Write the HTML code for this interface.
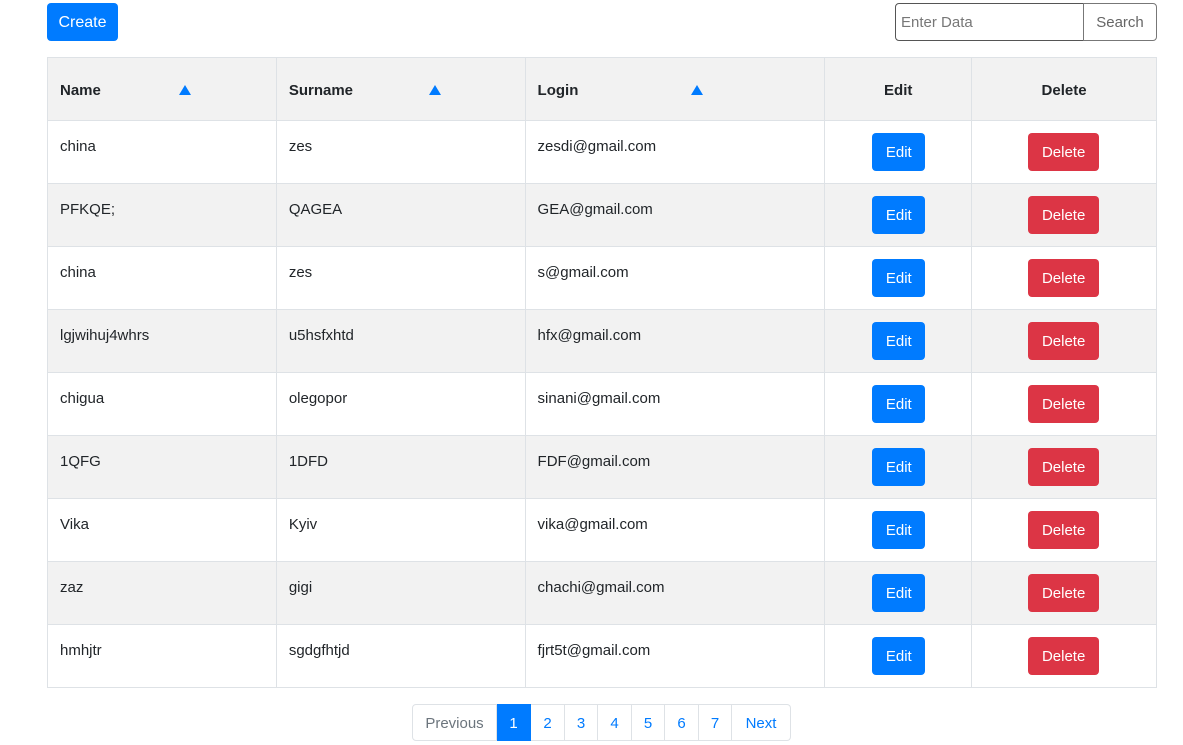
<!DOCTYPE html>
<html><head><style>
body{margin:0;width:1183px;height:745px;background:#fff;font-family:"Liberation Sans",sans-serif;font-size:15px;color:#212529;position:relative;overflow:hidden}
.a{position:absolute;box-sizing:border-box}
.btn{position:absolute;box-sizing:border-box;border-radius:4px;color:#fff;text-align:center;font-size:15px}
.blue{background:#007bff}.red{background:#dc3545}
table{position:absolute;left:47px;top:57px;border-collapse:collapse;width:1110px}
td,th{border:1px solid #dee2e6;height:63px;padding:0 12px;box-sizing:border-box;text-align:left;vertical-align:top;line-height:24px}
td{padding-top:14px}
th{vertical-align:middle;font-weight:bold;padding-top:4px}
tr:nth-child(even) td{background:#f2f2f2}
thead th{background:#f2f2f2}
td.c{position:relative}
.c .btn{top:12px;height:38px;line-height:40px}
.c .blue{left:47px;width:53px}
.c .red{left:56px;width:71px}
.tri{display:inline-block;width:0;height:0;border-left:6px solid transparent;border-right:6px solid transparent;border-bottom:10px solid #007bff;position:absolute}
.pg{position:absolute;top:704px;height:37px;box-sizing:border-box;border:1px solid #dee2e6;border-left:none;color:#007bff;text-align:center;line-height:38px;font-size:15px}
</style></head><body>
<div class="btn blue" style="left:47px;top:3px;width:71px;height:38px;line-height:40px;font-size:16px">Create</div>
<div class="a" style="left:895px;top:3px;width:189px;height:38px;border:1px solid #555;border-radius:4px 0 0 4px;color:#777;padding-left:5px;line-height:38px;font-size:15px">Enter Data</div>
<div class="a" style="left:1083px;top:3px;width:74px;height:38px;border:1px solid #777;border-radius:0 4px 4px 0;color:#666;text-align:center;line-height:38px;font-size:15px">Search</div>
<table>
<colgroup><col style="width:229px"><col style="width:249px"><col style="width:300px"><col style="width:147px"><col style="width:185px"></colgroup>
<thead><tr><th style="position:relative">Name<span class="tri" style="left:131px;top:27px"></span></th><th style="position:relative">Surname<span class="tri" style="left:152px;top:27px"></span></th><th style="position:relative">Login<span class="tri" style="left:165px;top:27px"></span></th><th style="text-align:center">Edit</th><th style="text-align:center">Delete</th></tr></thead>
<tbody>
<tr><td>china</td><td>zes</td><td>zesdi@gmail.com</td><td class="c"><div class="btn blue">Edit</div></td><td class="c"><div class="btn red">Delete</div></td></tr>
<tr><td>PFKQE;</td><td>QAGEA</td><td>GEA@gmail.com</td><td class="c"><div class="btn blue">Edit</div></td><td class="c"><div class="btn red">Delete</div></td></tr>
<tr><td>china</td><td>zes</td><td>s@gmail.com</td><td class="c"><div class="btn blue">Edit</div></td><td class="c"><div class="btn red">Delete</div></td></tr>
<tr><td>lgjwihuj4whrs</td><td>u5hsfxhtd</td><td>hfx@gmail.com</td><td class="c"><div class="btn blue">Edit</div></td><td class="c"><div class="btn red">Delete</div></td></tr>
<tr><td>chigua</td><td>olegopor</td><td>sinani@gmail.com</td><td class="c"><div class="btn blue">Edit</div></td><td class="c"><div class="btn red">Delete</div></td></tr>
<tr><td>1QFG</td><td>1DFD</td><td>FDF@gmail.com</td><td class="c"><div class="btn blue">Edit</div></td><td class="c"><div class="btn red">Delete</div></td></tr>
<tr><td>Vika</td><td>Kyiv</td><td>vika@gmail.com</td><td class="c"><div class="btn blue">Edit</div></td><td class="c"><div class="btn red">Delete</div></td></tr>
<tr><td>zaz</td><td>gigi</td><td>chachi@gmail.com</td><td class="c"><div class="btn blue">Edit</div></td><td class="c"><div class="btn red">Delete</div></td></tr>
<tr><td>hmhjtr</td><td>sgdgfhtjd</td><td>fjrt5t@gmail.com</td><td class="c"><div class="btn blue">Edit</div></td><td class="c"><div class="btn red">Delete</div></td></tr>
</tbody></table>
<div class="pg" style="left:412px;width:85px;border-left:1px solid #dee2e6;border-radius:4px 0 0 4px;color:#6c757d">Previous</div>
<div class="pg" style="left:497px;width:34px;background:#007bff;color:#fff;border-color:#007bff">1</div>
<div class="pg" style="left:531px;width:34px">2</div>
<div class="pg" style="left:565px;width:33px">3</div>
<div class="pg" style="left:598px;width:34px">4</div>
<div class="pg" style="left:632px;width:33px">5</div>
<div class="pg" style="left:665px;width:34px">6</div>
<div class="pg" style="left:699px;width:33px">7</div>
<div class="pg" style="left:732px;width:59px;border-radius:0 4px 4px 0">Next</div>
</body></html>
